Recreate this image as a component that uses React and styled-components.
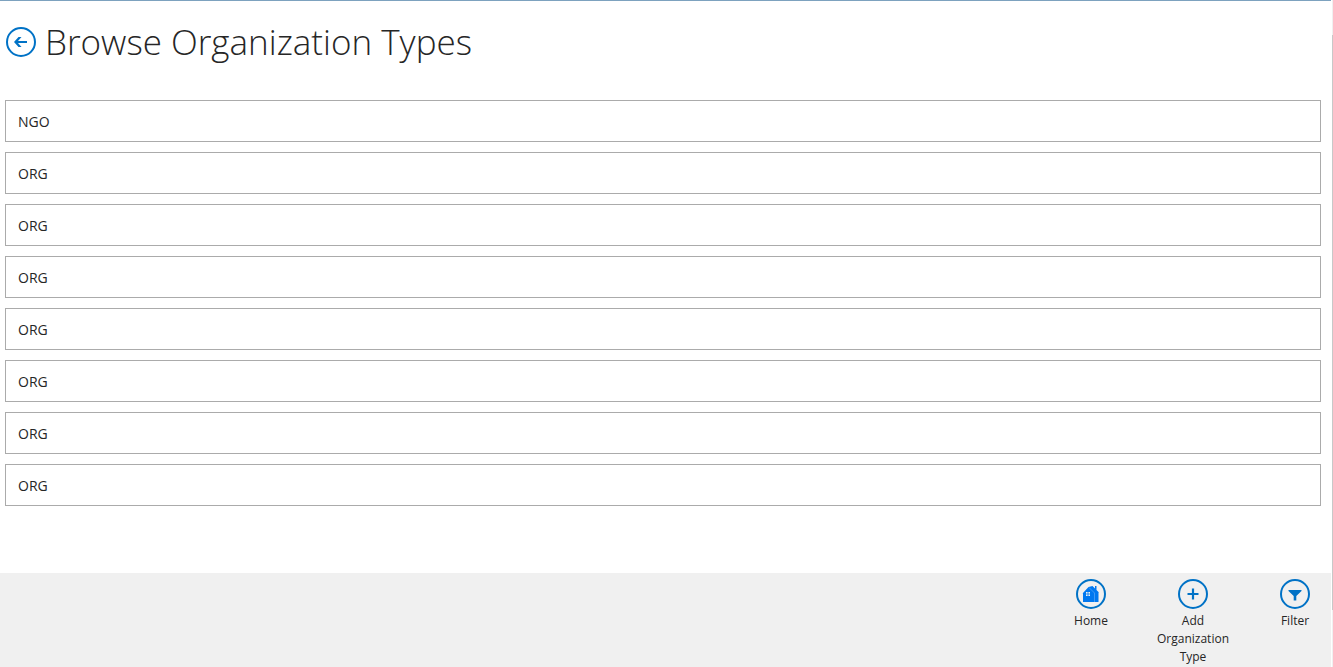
import React from "react";
import styled, { createGlobalStyle } from "styled-components";

const GlobalStyle = createGlobalStyle`
  * { box-sizing: border-box; }
  body {
    margin: 0;
    background: #ffffff;
    color: #262626;
    font-family: "Segoe UI", "Open Sans", "Noto Sans", sans-serif;
  }
`;

const Shell = styled.div`
  display: flex;
  gap: 1px;
  min-height: 100vh;
`;

const Page = styled.div`
  flex: 1;
  min-width: 0;
  display: flex;
  flex-direction: column;
  border-top: 1px solid #7da2bf;
`;

const Header = styled.header`
  display: flex;
  align-items: center;
  gap: 9px;
  height: 82px;
  padding-left: 6px;
`;

const BackButton = styled.button`
  padding: 0;
  border: 0;
  background: none;
  height: 30px;
  cursor: pointer;
`;

const Title = styled.h1`
  margin: 0;
  font-size: 35px;
  line-height: 48px;
  font-weight: 330;
  white-space: nowrap;
`;

const List = styled.ul`
  flex: 1;
  display: flex;
  flex-direction: column;
  gap: 10px;
  margin: 0;
  padding: 17px 10px 24px 5px;
  list-style: none;
`;

const RowButton = styled.button`
  display: block;
  width: 100%;
  height: 42px;
  padding: 2px 12px 0;
  border: 1px solid #ababab;
  background: #ffffff;
  color: #262626;
  font: inherit;
  font-size: 14px;
  line-height: 18px;
  text-align: left;
  cursor: pointer;
`;

const CommandBar = styled.footer`
  display: flex;
  justify-content: flex-end;
  align-items: flex-start;
  gap: 30px;
  min-height: 94px;
  padding: 6px 0 0;
  background: #f0f0f0;
`;

const Command = styled.button`
  display: flex;
  flex-direction: column;
  align-items: center;
  gap: 3px;
  width: 72px;
  padding: 0;
  border: 0;
  background: none;
  color: #262626;
  font: inherit;
  font-size: 12px;
  line-height: 18px;
  text-align: center;
  cursor: pointer;
`;

const Scrollbar = styled.div`
  width: 1px;
  padding: 35px 0 57px;
  display: flex;
  background: #f0f0f0;
`;

const Thumb = styled.div`
  flex: 1;
  background: #c8c8c8;
`;

const CircleSvg = styled.svg`
  display: block;
  width: 30px;
  height: 30px;
  flex: none;
`;

function CircleIcon({ children }) {
  return (
    <CircleSvg viewBox="0 0 30 30" aria-hidden="true">
      <circle cx="15" cy="15" r="14" fill="none" stroke="#0072c6" strokeWidth="2" />
      {children}
    </CircleSvg>
  );
}

const BackIcon = () => (
  <CircleIcon>
    <path d="M8 15L12.500 10H15.500L12 14H21V16H12L15.500 20H12.500Z" fill="#0072c6" />
  </CircleIcon>
);

const HomeIcon = () => (
  <CircleIcon>
    <path d="M6.500 14.500L12.500 8L16.500 7L19 9.500V7H20.500V11L23 13.500H22.500V23H7V14.500Z" fill="#0078f0" />
    <path d="M13 8.500L18.500 14V23" fill="none" stroke="#5aa8f5" strokeWidth="0.7" />
    <path d="M10 13H14V17H10Z" fill="#f0f0f0" />
    <path d="M12 13V17M10 15H14" stroke="#0078f0" strokeWidth="0.8" />
  </CircleIcon>
);

const AddIcon = () => (
  <CircleIcon>
    <path d="M15 9.500V20.500M9.500 15H20.500" fill="none" stroke="#0072c6" strokeWidth="2.2" />
  </CircleIcon>
);

const FilterIcon = () => (
  <CircleIcon>
    <path d="M8.500 11H21.500V12L16.300 17V21.500H13.700V17L8.500 12Z" fill="#0072c6" />
  </CircleIcon>
);

const organizationTypes = ["NGO", "ORG", "ORG", "ORG", "ORG", "ORG", "ORG", "ORG"];

const commands = [
  { label: "Home", Icon: HomeIcon },
  { label: "Add Organization Type", Icon: AddIcon },
  { label: "Filter", Icon: FilterIcon },
];

export default function App() {
  return (
    <>
      <GlobalStyle />
      <Shell>
        <Page>
          <Header>
            <BackButton type="button" aria-label="Back">
              <BackIcon />
            </BackButton>
            <Title>Browse Organization Types</Title>
          </Header>
          <List>
            {organizationTypes.map((name, index) => (
              <li key={index}>
                <RowButton type="button">{name}</RowButton>
              </li>
            ))}
          </List>
          <CommandBar>
            {commands.map(({ label, Icon }) => (
              <Command type="button" key={label}>
                <Icon />
                <span>{label}</span>
              </Command>
            ))}
          </CommandBar>
        </Page>
        <Scrollbar>
          <Thumb />
        </Scrollbar>
      </Shell>
    </>
  );
}
